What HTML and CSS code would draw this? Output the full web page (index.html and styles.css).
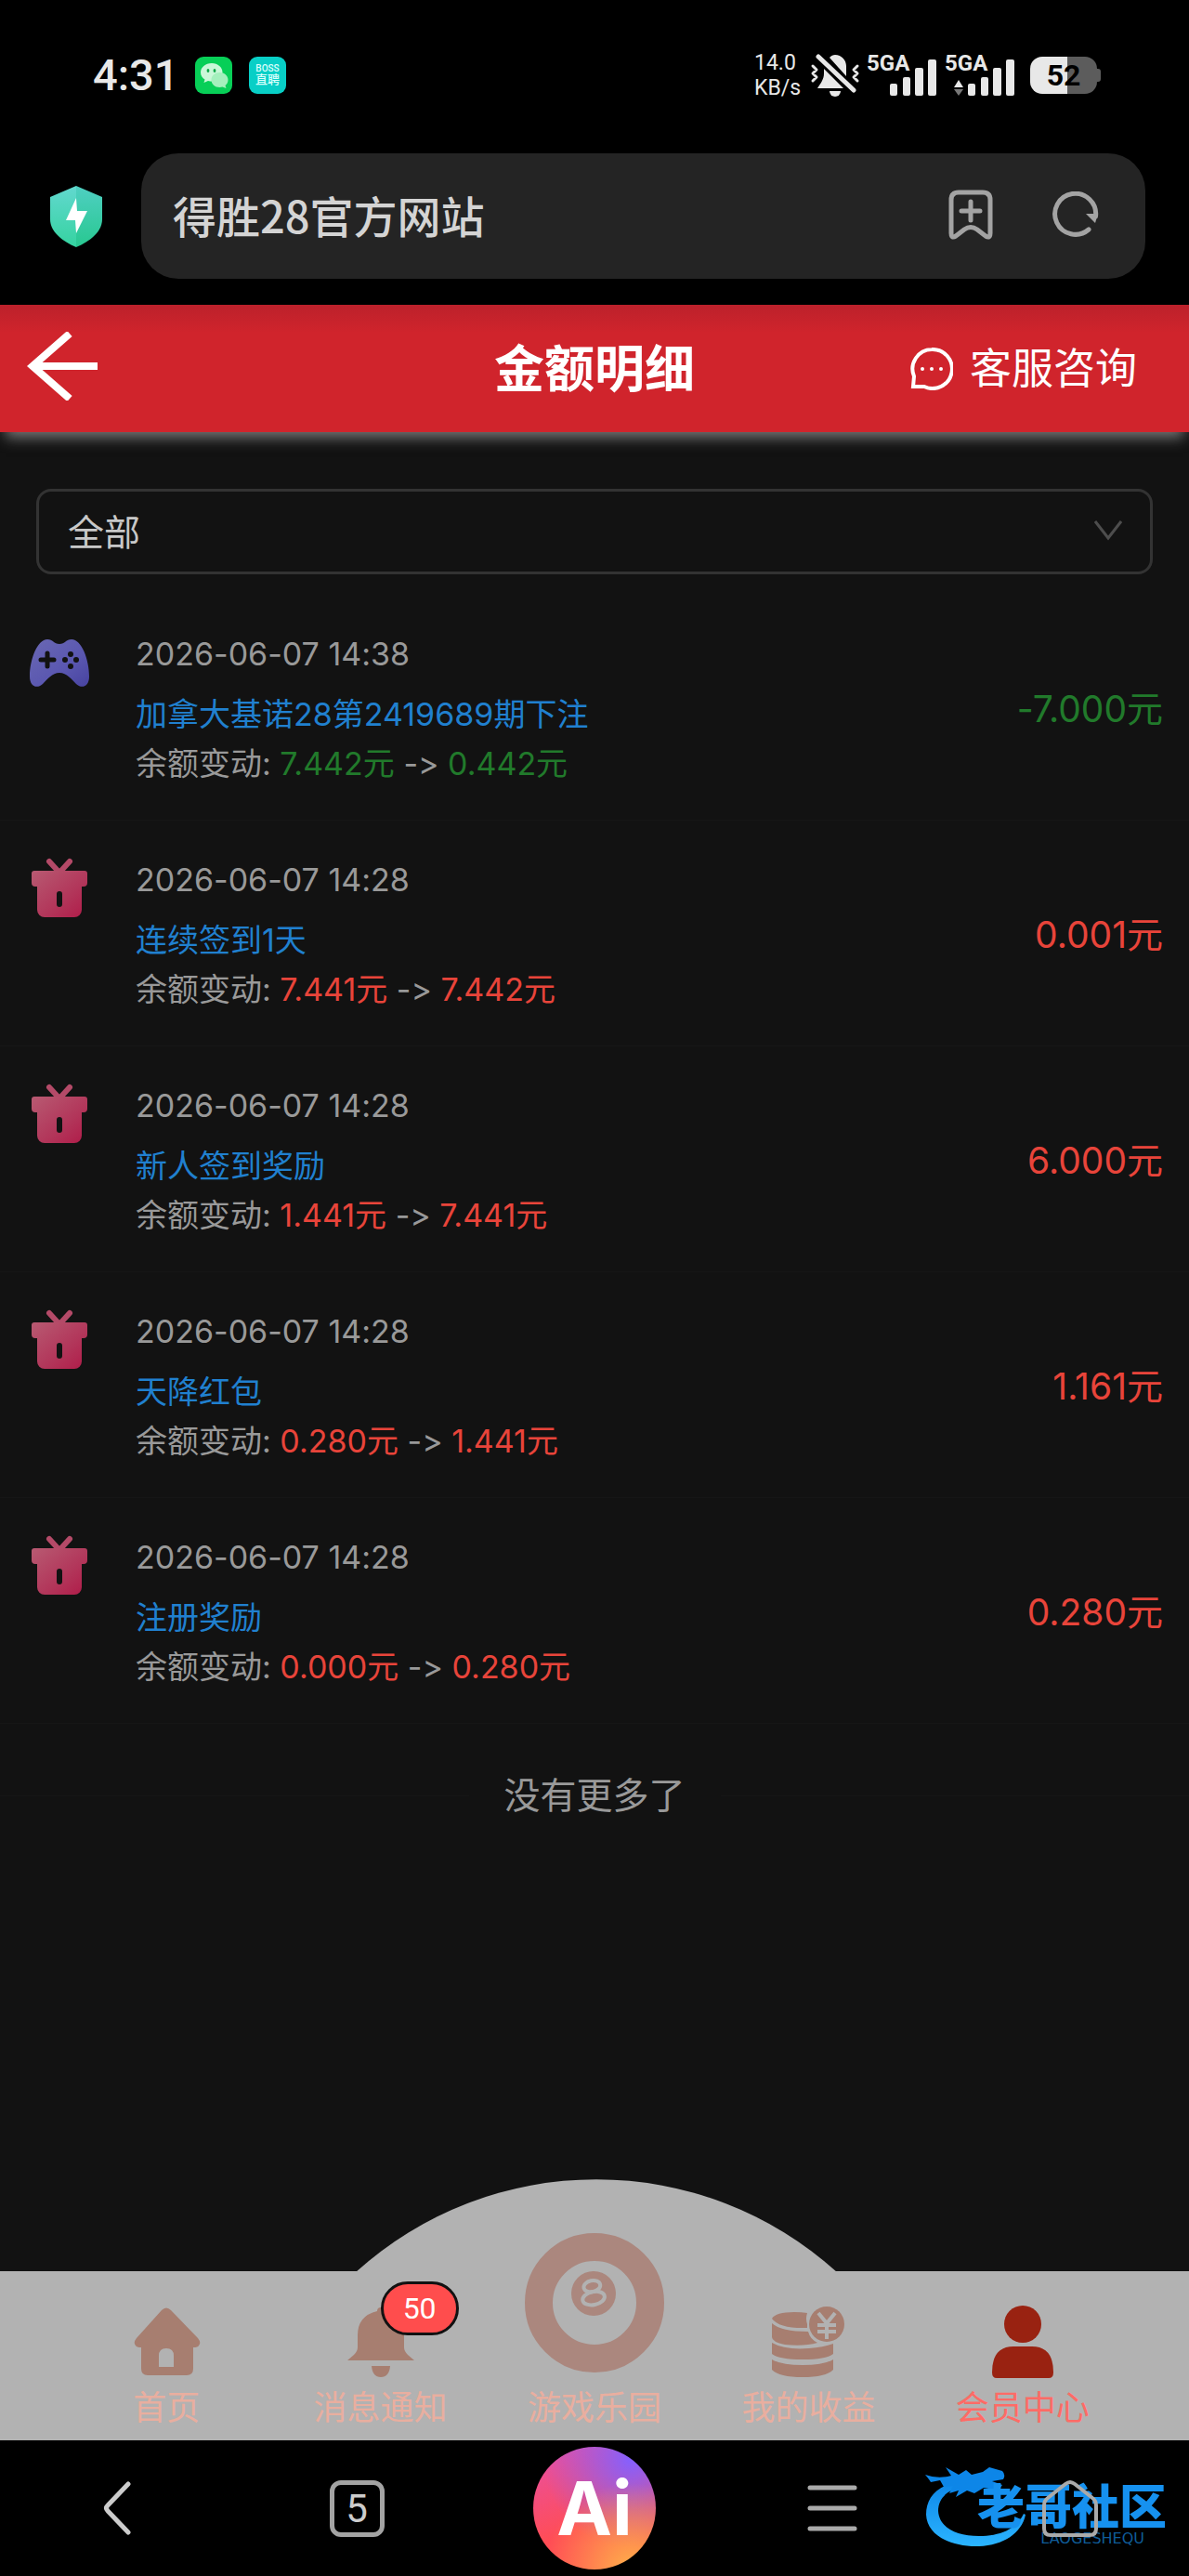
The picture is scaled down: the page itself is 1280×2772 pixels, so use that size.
FILE: index.html
```html
<!DOCTYPE html>
<html lang="zh-CN">
<head>
<meta charset="utf-8">
<meta name="viewport" content="width=device-width, initial-scale=1">
<title>金额明细</title>
<link rel="stylesheet" href="styles.css">
</head>
<body>
<svg class="defs" aria-hidden="true">
  <defs>
    <linearGradient id="giftFill" x1="0" y1="0" x2="1" y2="1">
      <stop offset="0" stop-color="#b85a72"/><stop offset="0.6" stop-color="#b2365a"/><stop offset="1" stop-color="#b01a48"/>
    </linearGradient>
    <linearGradient id="padFill" x1="0" y1="0" x2="1" y2="1">
      <stop offset="0" stop-color="#6a68b4"/><stop offset="0.6" stop-color="#5a57b0"/><stop offset="1" stop-color="#4743a0"/>
    </linearGradient>
    <linearGradient id="shieldLeft" x1="0" y1="0" x2="0" y2="1">
      <stop offset="0" stop-color="#62d8cf"/><stop offset="1" stop-color="#35d3a0"/>
    </linearGradient>
    <linearGradient id="shieldRight" x1="0" y1="0" x2="0" y2="1">
      <stop offset="0" stop-color="#4fcfc2"/><stop offset="1" stop-color="#28c890"/>
    </linearGradient>
    <linearGradient id="dragonFill" x1="0" y1="0" x2="0" y2="1">
      <stop offset="0" stop-color="#0d86e8"/><stop offset="1" stop-color="#2bb4ff"/>
    </linearGradient>
    <symbol id="gift" viewBox="0 0 64 64">
      <path d="M21 4 32 16 43 4" fill="none" stroke="#b44a68" stroke-width="6" stroke-linecap="round" stroke-linejoin="round"/>
      <path fill="url(#giftFill)" fill-rule="evenodd" d="M5 14h54a3 3 0 0 1 3 3v10a4 4 0 0 1-4 4h-2v25a8 8 0 0 1-8 8H16a8 8 0 0 1-8-8V31H6a4 4 0 0 1-4-4V17a3 3 0 0 1 3-3ZM32 36a3 3 0 0 0-3 3v11a3 3 0 0 0 6 0V39a3 3 0 0 0-3-3Z"/>
    </symbol>
  </defs>
</svg>

<div class="status-bar">
  <div class="status-left">
    <span class="clock">4:31</span>
    <svg class="app-badge" viewBox="0 0 40 40" aria-hidden="true">
      <rect width="40" height="40" rx="9" fill="#07cf57"/>
      <path d="M18 7c-7 0-12 4.500-12 10 0 3.500 2 6 4.500 7.600L9.500 28l4.500-2c1.500.4 3 .6 4 .6 7 0 11.500-4.500 11.500-9.800S24.500 7 18 7Z" fill="#c9f8d8"/>
      <ellipse cx="14" cy="15" rx="1.400" ry="2" fill="#0ba848"/><ellipse cx="21" cy="15" rx="1.400" ry="2" fill="#0ba848"/>
      <path d="M26.500 17c-5 0-9 3.500-9 8s4 8 9 8c1 0 2-.2 3-.5l4 1.500-1-3c1.800-1.500 3-3.500 3-6 0-4.500-4-8-9-8Z" fill="#a4f0bd"/>
    </svg>
    <span class="app-badge boss"><span>BOSS</span><span class="boss-cn">直聘</span></span>
  </div>
  <div class="status-right">
    <div class="speed"><span>14.0</span><span>KB/s</span></div>
    <svg class="mute" viewBox="0 0 54 46" aria-hidden="true">
      <path d="M21 4c1.500-2 4-3 6-3 7 0 12 6 12 12v11ZM15 16v5c0 6-3 10-7 16h28Z" fill="#e8e8e8"/>
      <path d="M9 3 47 39" stroke="#e8e8e8" stroke-width="5" stroke-linecap="round"/>
      <path d="M21 40h12a6 6 0 0 1-12 0Z" fill="#e8e8e8"/>
      <path d="m3 13 4 4-4 4 4 4-4 4M51 13l-4 4 4 4-4 4 4 4" fill="none" stroke="#e8e8e8" stroke-width="3" stroke-linecap="round" stroke-linejoin="round"/>
    </svg>
    <div class="signal">
      <svg viewBox="0 0 76 46" aria-hidden="true"><g fill="#e8e8e8"><rect x="25" y="32" width="8" height="13" rx="2"/><rect x="39" y="25" width="8" height="20" rx="2"/><rect x="52" y="15" width="9" height="30" rx="2"/><rect x="66" y="6" width="9" height="39" rx="2"/></g></svg>
      <span class="signal-label">5GA</span>
    </div>
    <div class="signal">
      <svg viewBox="0 0 76 46" aria-hidden="true"><g fill="#e8e8e8"><rect x="25" y="32" width="8" height="13" rx="2"/><rect x="39" y="25" width="8" height="20" rx="2"/><rect x="52" y="15" width="9" height="30" rx="2"/><rect x="66" y="6" width="9" height="39" rx="2"/><path d="m15 28 5 8H10Z"/></g><path d="M10 38h10l-5 7Z" fill="#777"/></svg>
      <span class="signal-label">5GA</span>
    </div>
    <div class="battery"><span>52</span></div>
  </div>
</div>

<div class="browser-bar">
  <svg class="shield" viewBox="0 0 56 66" aria-hidden="true">
    <path d="M28 0 0 12v24c0 13 12 23 28 30Z" fill="url(#shieldLeft)"/>
    <path d="M28 0 56 12v24c0 13-12 23-28 30Z" fill="url(#shieldRight)"/>
    <path d="M28 13 17 37h10l1 14 12-24H29Z" fill="#fff"/>
  </svg>
  <div class="address">
    <span class="site">得胜28官方网站</span>
    <button class="icon-btn" aria-label="添加书签">
      <svg width="48" height="54" viewBox="0 0 48 54"><path d="M11 3h26q8 0 8 8v36q0 6-5 3l-9-7q-7-5-14 0l-9 7q-5 3-5-3V11q0-8 8-8Z" fill="none" stroke="#a3a3a3" stroke-width="5"/><path d="M24 13v20M14 23h20" stroke="#a3a3a3" stroke-width="5" stroke-linecap="round"/></svg>
    </button>
    <button class="icon-btn" aria-label="刷新">
      <svg width="50" height="50" viewBox="0 0 50 50"><path d="M39 41A22 22 0 1 1 46.500 27" fill="none" stroke="#a3a3a3" stroke-width="5" stroke-linecap="round"/><path d="M36 24h13l-3 10Z" fill="#a3a3a3"/></svg>
    </button>
  </div>
</div>

<header class="page-head">
  <a class="back" href="#" aria-label="返回">
    <svg width="76" height="74" viewBox="0 0 76 74"><path d="M46 2 6 37l40 35M6 37h70" fill="none" stroke="#fff" stroke-width="8"/></svg>
  </a>
  <h1>金额明细</h1>
  <a class="service" href="#">
    <svg width="46" height="46" viewBox="0 0 46 46" aria-hidden="true"><path d="M23 2a21 21 0 1 1-8 40H3l1-11A21 21 0 0 1 23 2Z" fill="none" stroke="#fff" stroke-width="4"/><g fill="#fff"><circle cx="13" cy="23" r="2"/><circle cx="23" cy="23" r="2"/><circle cx="33" cy="23" r="2"/></g></svg>
    <span>客服咨询</span>
  </a>
</header>

<main>
  <div class="filter">
    <select aria-label="明细类型"><option>全部</option></select>
    <svg class="chevron" viewBox="0 0 30 22" aria-hidden="true"><path d="m1 1 14 18L29 1" fill="none" stroke="#4d4d4d" stroke-width="3"/></svg>
  </div>

  <ul class="records">
    <li class="record">
      <svg class="record-icon" viewBox="0 0 64 64" aria-hidden="true">
        <path d="M19 8c6 0 7 5 13 5s7-5 13-5c11 0 19 22 19 40 0 10-7 14-14 8-5-5-10-12-18-12s-13 7-18 12C7 62 0 58 0 48 0 30 8 8 19 8Z" fill="url(#padFill)"/>
        <path d="M19 23v14M12 30h14" stroke="#121212" stroke-width="5" stroke-linecap="round"/>
        <g fill="#121212"><circle cx="44" cy="24" r="3"/><circle cx="44" cy="37" r="3"/><circle cx="38" cy="30" r="3"/><circle cx="50" cy="30" r="3"/></g>
      </svg>
      <div class="record-body">
        <time>2026-06-07 14:38</time>
        <a class="record-title" href="#">加拿大基诺28第2419689期下注</a>
        <p>余额变动: <span class="out">7.442元</span> -&gt; <span class="out">0.442元</span></p>
      </div>
      <strong class="amount out">-7.000元</strong>
    </li>
    <li class="record">
      <svg class="record-icon" aria-hidden="true"><use href="#gift"/></svg>
      <div class="record-body">
        <time>2026-06-07 14:28</time>
        <a class="record-title" href="#">连续签到1天</a>
        <p>余额变动: <span class="in">7.441元</span> -&gt; <span class="in">7.442元</span></p>
      </div>
      <strong class="amount in">0.001元</strong>
    </li>
    <li class="record">
      <svg class="record-icon" aria-hidden="true"><use href="#gift"/></svg>
      <div class="record-body">
        <time>2026-06-07 14:28</time>
        <a class="record-title" href="#">新人签到奖励</a>
        <p>余额变动: <span class="in">1.441元</span> -&gt; <span class="in">7.441元</span></p>
      </div>
      <strong class="amount in">6.000元</strong>
    </li>
    <li class="record">
      <svg class="record-icon" aria-hidden="true"><use href="#gift"/></svg>
      <div class="record-body">
        <time>2026-06-07 14:28</time>
        <a class="record-title" href="#">天降红包</a>
        <p>余额变动: <span class="in">0.280元</span> -&gt; <span class="in">1.441元</span></p>
      </div>
      <strong class="amount in">1.161元</strong>
    </li>
    <li class="record">
      <svg class="record-icon" aria-hidden="true"><use href="#gift"/></svg>
      <div class="record-body">
        <time>2026-06-07 14:28</time>
        <a class="record-title" href="#">注册奖励</a>
        <p>余额变动: <span class="in">0.000元</span> -&gt; <span class="in">0.280元</span></p>
      </div>
      <strong class="amount in">0.280元</strong>
    </li>
  </ul>
  <p class="list-end">没有更多了</p>
</main>

<nav class="tabs">
  <svg class="dome" viewBox="0 0 518 100" aria-hidden="true"><path d="M0 100A386 386 0 0 1 518 100Z" fill="#b2b2b2"/></svg>
  <a class="tab" href="#">
    <svg class="tab-icon" viewBox="0 0 78 78" aria-hidden="true"><path fill="#a77e70" fill-rule="evenodd" d="M34 5q5-5 10 0l29 30q4 5 1 8-1 2-6 2v23q0 7-7 7H19q-7 0-7-7V45q-5 0-6-2-3-3 1-8ZM31 66h16V54q0-8-8-8t-8 8Z"/></svg>
    <span>首页</span>
  </a>
  <a class="tab" href="#">
    <svg class="tab-icon" viewBox="0 0 78 78" aria-hidden="true"><path fill="#a77e70" d="M39 2q4 0 4 4 21 5 21 26v13q0 4 4 8l7 6H3l7-6q4-4 4-8V32Q14 11 35 6q0-4 4-4ZM29 65h20q-1 12-10 12T29 65Z"/></svg>
    <span>消息通知</span>
    <b class="count">50</b>
  </a>
  <a class="tab" href="#">
    <svg class="ball" viewBox="0 0 150 150" aria-hidden="true">
      <circle cx="75" cy="75" r="60" fill="none" stroke="#ab877e" stroke-width="30"/>
      <circle cx="74" cy="65" r="24" fill="#ab877e"/>
      <g fill="none" stroke="#b2b2b2" stroke-width="4" transform="rotate(-12 74 65)"><ellipse cx="74" cy="57" rx="9" ry="6"/><ellipse cx="73" cy="70" rx="12" ry="7"/></g>
    </svg>
    <span>游戏乐园</span>
  </a>
  <a class="tab" href="#">
    <svg class="tab-icon" viewBox="0 0 78 78" aria-hidden="true">
      <path fill="#a77e70" d="M0 14q4-7 24-7 8 0 14 1-2 6 0 12v4Q8 25 0 14ZM0 19q10 9 39 9 2 8 10 12-14 4-35 2Q0 39 0 34ZM0 40q14 8 40 6 15-1 26-5v11q-8 6-33 6T0 52ZM0 58q10 6 33 6t33-6v11q-8 8-33 8T0 69Z"/>
      <circle cx="59" cy="20" r="19" fill="#a77e70"/>
      <path d="m50 8 9 11 9-11M59 19v17M49 21h20M49 28h20" fill="none" stroke="#b2b2b2" stroke-width="4"/>
    </svg>
    <span>我的收益</span>
  </a>
  <a class="tab current" href="#">
    <svg class="tab-icon" viewBox="0 0 78 78" aria-hidden="true"><g fill="#992211"><circle cx="39" cy="20" r="20"/><path d="M6 72Q6 44 29 44h20q23 0 23 28 0 6-5 6H11q-5 0-5-6Z"/></g></svg>
    <span>会员中心</span>
  </a>
</nav>

<nav class="browser-nav">
  <div class="watermark">
    <svg class="dragon" viewBox="0 0 112 92" aria-hidden="true">
      <path fill="url(#dragonFill)" d="M38 20C12 24 1 38 1 56c1 23 28 35 57 34 26-1 46-14 50-34l-2-1C98 72 80 79 58 79 34 79 15 70 14 52c0-15 12-24 28-26Z"/>
      <path fill="#0d86e8" d="M0 13q14 5 28 1l-6-9 14 8 8-5 6 5 12-3 7-5 14 4q4 4 1 9l-12 2 11 4-4 6-16-3-10 6-8-3-12 7 3-7-10 3 4-8-10 1-4-7-10 2Q5 19 0 13Z"/>
    </svg>
    <div class="mark-text"><span class="mark-cn">老哥社区</span><span class="mark-en">LAOGESHEQU</span></div>
  </div>
  <button aria-label="后退"><svg width="34" height="60" viewBox="0 0 34 60"><path d="M27 4 5 27q-3 3 0 6l22 23" fill="none" stroke="#ccc" stroke-width="5" stroke-linecap="round"/></svg></button>
  <button class="pages" aria-label="标签页"><span>5</span></button>
  <button class="ai">Ai</button>
  <button aria-label="菜单"><svg width="54" height="50" viewBox="0 0 54 50"><path d="M3 3h48M3 25h48M3 47h48" stroke="#aaa" stroke-width="5" stroke-linecap="round"/></svg></button>
  <button aria-label="主页"><svg width="60" height="62" viewBox="0 0 60 62"><path d="M25 5q5-4 10 0l19 15q4 3 4 8v25q0 7-7 7H9q-7 0-7-7V28q0-5 4-8Z" fill="none" stroke="#aaa" stroke-width="4"/></svg></button>
</nav>
</body>
</html>
```
FILE: styles.css
```css
* { box-sizing: border-box; }

body {
  margin: 0;
  min-height: 100vh;
  display: flex;
  flex-direction: column;
  background: #121212;
  color: #999;
  font-family: Inter, "Noto Sans CJK SC", sans-serif;
  font-size: 34px;
  font-variant-ligatures: none;
}

a { color: inherit; text-decoration: none; }
button { border: 0; padding: 0; background: none; color: inherit; font: inherit; }
svg { display: block; flex: none; }
.defs { position: absolute; width: 0; height: 0; }

/* Phone status bar */
.status-bar {
  display: flex;
  justify-content: space-between;
  padding: 56px 99px 60px 100px;
  background: #000;
  color: #e8e8e8;
  font-family: Roboto, "Noto Sans CJK SC", sans-serif;
}
.status-left, .status-right { display: flex; align-items: center; height: 49px; }
.status-left { gap: 18px; }
.clock { font-size: 47px; font-weight: 500; width: 92px; }
.app-badge { width: 40px; height: 40px; }
.boss {
  display: flex;
  flex-direction: column;
  align-items: center;
  justify-content: center;
  border-radius: 9px;
  background: #08cfc6;
  color: #d8fffc;
  font-size: 10px;
  line-height: 10px;
  font-weight: 500;
}
.boss-cn { font-size: 13px; line-height: 13px; }
.speed {
  width: 50px;
  display: flex;
  flex-direction: column;
  font-size: 23px;
  line-height: 27px;
}
.mute { width: 54px; height: 46px; margin: 0 7px 0 10px; }
.signal { position: relative; width: 76px; margin-right: 8px; }
.signal-label {
  position: absolute;
  left: 0;
  top: -2px;
  font-size: 24px;
  line-height: 24px;
  font-weight: 700;
}
.battery {
  position: relative;
  width: 72px;
  height: 40px;
  margin-left: 8px;
  border-radius: 13px;
  background: linear-gradient(90deg, #e8e8e8 56%, #5c5c5c 56%);
  color: #000;
  font-size: 32px;
  line-height: 40px;
  font-weight: 700;
  text-align: center;
}
.battery::after {
  content: "";
  position: absolute;
  right: -4px;
  top: 13px;
  width: 4px;
  height: 14px;
  border-radius: 0 3px 3px 0;
  background: #5c5c5c;
}

/* Browser address bar */
.browser-bar {
  display: flex;
  align-items: center;
  gap: 42px;
  padding: 0 47px 28px 54px;
  background: #000;
}
.shield { width: 56px; height: 66px; }
.address {
  flex: 1;
  display: flex;
  align-items: center;
  gap: 64px;
  height: 135px;
  padding: 0 50px 4px 34px;
  border-radius: 40px;
  background: #242424;
}
.site {
  flex: 1;
  color: #d4d4d4;
  font-family: "Noto Sans CJK SC", sans-serif;
  font-size: 47px;
  font-weight: 500;
}

/* Page header */
.page-head {
  position: relative;
  display: grid;
  grid-template-columns: 1fr auto 1fr;
  align-items: center;
  height: 137px;
  padding: 0 56px 0 29px;
  background: linear-gradient(#bc212b, #d0242c 30px);
  box-shadow: 0 12px 14px -6px #777;
  color: #fff;
}
.back { padding-bottom: 6px; }
.page-head h1 {
  margin: 0;
  padding: 2px 0 0 27px;
  font-size: 54px;
  line-height: 64px;
  font-weight: 700;
}
.service {
  justify-self: end;
  display: flex;
  align-items: center;
  gap: 18px;
  font-size: 45px;
  line-height: 54px;
}

/* Filter */
.filter { position: relative; margin: 61px 39px 22px; }
.filter select {
  display: block;
  width: 100%;
  height: 92px;
  padding: 0 31px;
  border: 3px solid #333;
  border-radius: 16px;
  appearance: none;
  background: transparent;
  color: #c8c8c8;
  font: inherit;
  font-size: 39px;
}
.chevron {
  position: absolute;
  right: 33px;
  top: 34px;
  width: 30px;
  height: 22px;
  pointer-events: none;
}

/* Records */
.records { margin: 0; padding: 0; list-style: none; }
.record {
  display: flex;
  align-items: center;
  padding: 40px 28px 40px 32px;
  border-bottom: 1px solid #161616;
}
.record-icon { align-self: flex-start; width: 64px; height: 64px; }
.record-body { flex: 1; display: flex; flex-direction: column; margin-left: 50px; line-height: 40px; }
.record-body time { line-height: 48px; }
.record-title { margin: 21px 0 13px; color: #2080cf; }
.record p { margin: 0; }
.amount { padding-top: 4px; font-size: 39px; line-height: 48px; font-weight: 400; }
.out { color: #217a2b; }
.in { color: #e8443a; }

.list-end {
  display: flex;
  align-items: center;
  gap: 38px;
  margin: 52px 0;
  font-size: 39px;
  line-height: 50px;
}
.list-end::before, .list-end::after { content: ""; flex: 1; height: 1px; background: #161616; }

/* App tabs */
.tabs {
  position: relative;
  display: flex;
  align-items: flex-end;
  height: 182px;
  margin-top: auto;
  padding: 0 5% 15px;
  background: #b2b2b2;
  color: #e9ae9f;
}
.dome { position: absolute; left: calc(50% - 257px); bottom: 181px; width: 518px; height: 100px; }
.tab {
  position: relative;
  flex: 1;
  display: flex;
  flex-direction: column;
  align-items: center;
  gap: 12px;
  font-size: 36px;
  line-height: 40px;
}
.tab-icon { width: 78px; height: 78px; }
.ball { width: 150px; height: 150px; margin-bottom: 6px; }
.current { color: #ff6b66; }
.count {
  position: absolute;
  left: 50%;
  top: -26px;
  width: 84px;
  height: 58px;
  border: 3px solid #121212;
  border-radius: 29px;
  background: #ff4d4d;
  color: #fff;
  font-family: Roboto, sans-serif;
  font-size: 32px;
  font-weight: 400;
  line-height: 52px;
  text-align: center;
}

/* Browser bottom bar */
.browser-nav {
  position: relative;
  display: grid;
  grid-template-columns: repeat(5, 1fr);
  align-items: center;
  justify-items: center;
  height: 146px;
  background: #000;
}
.browser-nav button { position: relative; }
.pages {
  width: 59px;
  height: 61px;
  border: 5px solid #a3a3a3;
  border-radius: 12px;
  color: #ccc;
  font-family: Roboto, sans-serif;
  font-size: 42px;
  line-height: 51px;
}
.ai {
  width: 132px;
  height: 132px;
  border-radius: 50%;
  background:
    radial-gradient(circle at 80% 100%, #ffb04a, transparent 55%),
    radial-gradient(circle at 80% 10%, #8460ff, transparent 60%),
    linear-gradient(160deg, #e84fa8, #ff4d55 60%);
  color: #fff;
  font-size: 80px;
  line-height: 132px;
  font-weight: 700;
}
.watermark {
  position: absolute;
  right: 20px;
  top: 24px;
  width: 264px;
  display: flex;
  color: #1691ef;
}
.dragon { width: 112px; height: 92px; }
.mark-text {
  display: flex;
  flex-direction: column;
  align-items: flex-end;
  margin: 22px 0 0 -56px;
}
.mark-cn { font-size: 51px; line-height: 52px; font-weight: 900; white-space: nowrap; }
.mark-en { margin-right: 24px; color: #0f5c99; font-family: "DejaVu Sans", sans-serif; font-size: 16px; line-height: 16px; }
```
